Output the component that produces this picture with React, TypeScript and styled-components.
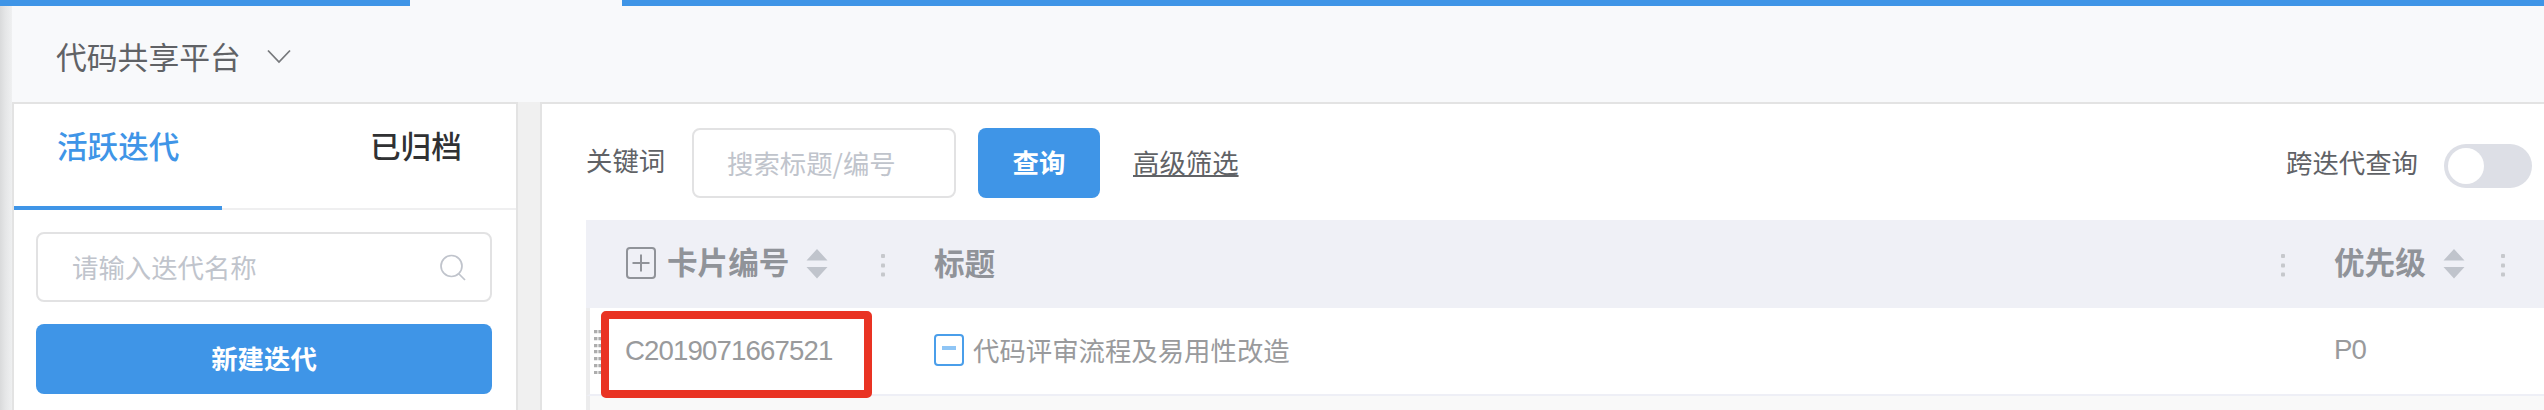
import React from "react";
import styled, { createGlobalStyle } from "styled-components";

const Global = createGlobalStyle`
  * { box-sizing: border-box; }
  html, body { margin: 0; padding: 0; overflow: hidden; }
  body {
    background: #f0f0f0;
    font-family: "Noto Sans CJK SC", "Liberation Sans", sans-serif;
    color: #606266;
  }
  button, input { font-family: inherit; }
`;

const Page = styled.div`
  width: 2544px;
  height: 410px;
  overflow: hidden;
  display: flex;
  flex-direction: column;
  background: #f0f0f0;
`;

const TopBar = styled.div`
  display: flex;
  flex: none;
  height: 6px;
  background: #3f95e7;
`;

const ActiveTab = styled.div`
  margin-left: 410px;
  width: 212px;
  background: #f8f9fb;
`;

const Main = styled.div`
  display: flex;
  flex: 1;
  min-height: 0;
`;

const EdgeShadow = styled.div`
  flex: none;
  width: 12px;
  background: linear-gradient(to right, #d9dadb, #e5e6e7 45%, #eff0f1);
`;

const Body = styled.div`
  flex: 1;
  min-width: 0;
  display: flex;
  flex-direction: column;
`;

const ProjectBar = styled.header`
  flex: none;
  height: 96px;
  padding: 3px 0 0 44px;
  display: flex;
  align-items: center;
  gap: 26px;
  background: #f8f9fb;
  font-size: 30.8px;
  line-height: 44px;
`;

const Columns = styled.div`
  flex: 1;
  min-height: 0;
  display: flex;
  gap: 22px;
`;

const Sidebar = styled.aside`
  flex: none;
  width: 506px;
  background: #fff;
  border: 2px solid #e3e3e3;
  border-bottom: 0;
`;

const Tabs = styled.nav`
  display: flex;
  height: 106px;
  border-bottom: 2px solid #efeff0;
`;

const Tab = styled.div<{ $active?: boolean }>`
  flex: none;
  width: ${(p) => (p.$active ? 208 : 294)}px;
  height: 106px;
  padding-top: 19px;
  padding-left: ${(p) => (p.$active ? 43 : 148)}px;
  font-size: 30.6px;
  line-height: 44px;
  font-weight: 500;
  color: ${(p) => (p.$active ? "#3f95e7" : "#303133")};
  border-bottom: ${(p) => (p.$active ? "4px solid #3f95e7" : "0")};
`;

const SideContent = styled.div`
  padding: 22px 24px 0 22px;
  display: flex;
  flex-direction: column;
  gap: 22px;
`;

const Field = styled.label<{ $width?: number; $inset: number }>`
  display: flex;
  align-items: center;
  flex: none;
  width: ${(p) => (p.$width ? p.$width + "px" : "auto")};
  height: 70px;
  padding: 0 24px 0 ${(p) => p.$inset}px;
  border: 2px solid #e2e2e3;
  border-radius: 8px;
  background: #fff;
`;

const Input = styled.input`
  flex: 1;
  min-width: 0;
  height: 60px;
  padding: 0 0 2px;
  border: 0;
  outline: 0;
  background: transparent;
  font-size: 26.4px;
  &::placeholder { color: #c0c4cc; opacity: 1; }
`;

const Button = styled.button<{ $width?: number }>`
  flex: none;
  width: ${(p) => (p.$width ? p.$width + "px" : "auto")};
  height: 70px;
  padding: 0 0 4px;
  border: 0;
  border-radius: 8px;
  background: #3f95e7;
  color: #fff;
  font-size: 26.4px;
  font-weight: 700;
`;

const Content = styled.main`
  flex: 1;
  min-width: 0;
  background: #fff;
  border-top: 2px solid #e3e3e3;
  border-left: 2px solid #e3e3e3;
  padding-left: 44px;
`;

const FilterBar = styled.div`
  display: flex;
  align-items: center;
  height: 116px;
  padding: 2px 12px 0 0;
  font-size: 26.4px;
  line-height: 38px;
`;

const Caption = styled.span`
  display: block;
  width: 106px;
  padding-bottom: 7px;
`;

const AdvancedLink = styled.a`
  margin: 0 auto 0 33px;
  padding-bottom: 2px;
  text-decoration: underline;
  text-decoration-thickness: 2px;
  text-underline-offset: 2px;
  text-decoration-skip-ink: none;
`;

const SwitchLabel = styled.span`
  margin-right: 26px;
  padding-bottom: 3px;
`;

const Switch = styled.div`
  width: 88px;
  height: 44px;
  margin-top: 6px;
  padding: 4px;
  border-radius: 22px;
  background: #dddfe6;
`;

const Knob = styled.div`
  width: 36px;
  height: 36px;
  border-radius: 50%;
  background: #fff;
`;

const Gap = styled.span<{ $w: number }>`
  flex: none;
  width: ${(p) => p.$w}px;
`;

const HeadRow = styled.div`
  display: grid;
  grid-template-columns: 348px 1400px 210px;
  height: 88px;
  background: #eff0f6;
  color: #909399;
  font-size: 30.6px;
  font-weight: 700;
  line-height: 44px;
`;

const HeadCell = styled.div<{ $inset?: number; $end?: number }>`
  display: flex;
  align-items: center;
  padding: 0 ${(p) => p.$end ?? 38}px 0 ${(p) => p.$inset ?? 0}px;
`;

const HeadText = styled.span<{ $lift: number }>`
  padding-bottom: ${(p) => p.$lift}px;
`;

const Dots = styled.svg`
  margin-left: auto;
  margin-top: 1px;
  flex: none;
`;

const DataRow = styled.div`
  display: grid;
  grid-template-columns: 344px 1400px 210px;
  height: 88px;
  border-left: 4px solid #ececed;
  border-bottom: 2px solid #eeeff6;
  color: #999a9c;
  font-size: 26.4px;
  line-height: 38px;
`;

const NextRow = styled.div`
  height: 14px;
  background: #f9f9f9;
  border-left: 4px solid #ececed;
`;

const Cell = styled.div`
  display: flex;
  align-items: center;
  padding-bottom: 2px;
`;

const CodeCell = styled(Cell)`
  position: relative;
  padding: 0 0 0 4px;
`;

const TitleText = styled.span`
  padding-bottom: 1px;
`;

const Latin = styled.span<{ $pad?: number }>`
  padding-left: ${(p) => p.$pad ?? 0}px;
  font-family: "Liberation Sans", sans-serif;
  font-size: 27.6px;
  letter-spacing: -0.85px;
`;

const Highlight = styled.div`
  position: absolute;
  left: 11px;
  top: 3px;
  width: 271px;
  height: 87px;
  border: 8px solid #e93323;
  border-radius: 5px;
`;

const SortIcon = () => (
  <svg width="22" height="30" viewBox="0 0 22 30" fill="#c0c4cc">
    <path d="M11 0 21.5 11.5H0.5Z M11 29.5 21.5 18H0.5Z" />
  </svg>
);

const DotsIcon = () => (
  <Dots width="6" height="24" viewBox="0 0 6 24" fill="#c6c8cc">
    <rect x="1" y="1" width="4" height="4" rx="1" />
    <rect x="1" y="10.5" width="4" height="4" rx="1" />
    <rect x="1" y="19.5" width="4" height="4" rx="1" />
  </Dots>
);

const PlusBox = () => (
  <svg width="30" height="34" viewBox="0 0 30 34" fill="none" stroke="#909399" strokeWidth="2">
    <rect x="1" y="1" width="28" height="30" rx="3" />
    <path d="M6.5 16H23.5 M15 7.5V24.5" />
  </svg>
);

const MinusBox = () => (
  <svg width="30" height="32" viewBox="0 0 30 32" fill="none" stroke="#4a9eea" strokeWidth="2">
    <rect x="1" y="1" width="28" height="30" rx="3" />
    <path d="M8 14H22" stroke="#8fc5f5" strokeWidth="4" />
  </svg>
);

const ChevronDown = () => (
  <svg width="24" height="16" viewBox="0 0 24 16" fill="none" stroke="#77797c" strokeWidth="1.8">
    <path d="M1 2.5 12 14 23 2.5" />
  </svg>
);

const SearchIcon = () => (
  <svg width="28" height="28" viewBox="0 0 28 28" fill="none" stroke="#c0c4cc" strokeWidth="1.7">
    <circle cx="13.5" cy="13" r="10.5" />
    <path d="M20.5 20.5 27 27" />
  </svg>
);

const handleRows = [0, 7, 14, 20, 27, 34, 41];

const DragHandle = () => (
  <svg width="16" height="46" viewBox="0 0 16 46" fill="#adadad">
    {handleRows.map((y) => (
      <path key={y} d={`M0 ${y + 2}h3.4v3.2h-3.4z M4.4 ${y + 2}h3.4v3.2h-3.4z`} />
    ))}
  </svg>
);

export default function App() {
  return (
    <Page>
      <Global />
      <TopBar>
        <ActiveTab />
      </TopBar>
      <Main>
        <EdgeShadow />
        <Body>
          <ProjectBar>
            <span>代码共享平台</span>
            <ChevronDown />
          </ProjectBar>
          <Columns>
            <Sidebar>
              <Tabs>
                <Tab $active>活跃迭代</Tab>
                <Tab>已归档</Tab>
              </Tabs>
              <SideContent>
                <Field $inset={34}>
                  <Input placeholder="请输入迭代名称" />
                  <SearchIcon />
                </Field>
                <Button>新建迭代</Button>
              </SideContent>
            </Sidebar>
            <Content>
              <FilterBar>
                <Caption>关键词</Caption>
                <Field $width={264} $inset={33}>
                  <Input placeholder="搜索标题/编号" />
                </Field>
                <Gap $w={22} />
                <Button $width={122}>查询</Button>
                <AdvancedLink>高级筛选</AdvancedLink>
                <SwitchLabel>跨迭代查询</SwitchLabel>
                <Switch>
                  <Knob />
                </Switch>
              </FilterBar>
              <HeadRow>
                <HeadCell $inset={40} $end={48}>
                  <PlusBox />
                  <Gap $w={11} />
                  <HeadText $lift={7}>卡片编号</HeadText>
                  <Gap $w={17} />
                  <SortIcon />
                  <DotsIcon />
                </HeadCell>
                <HeadCell $end={48}>
                  <HeadText $lift={4}>标题</HeadText>
                  <DotsIcon />
                </HeadCell>
                <HeadCell>
                  <HeadText $lift={7}>优先级</HeadText>
                  <Gap $w={17} />
                  <SortIcon />
                  <DotsIcon />
                </HeadCell>
              </HeadRow>
              <DataRow>
                <CodeCell>
                  <DragHandle />
                  <Latin $pad={15}>C2019071667521</Latin>
                  <Highlight />
                </CodeCell>
                <Cell>
                  <MinusBox />
                  <Gap $w={9} />
                  <TitleText>代码评审流程及易用性改造</TitleText>
                </Cell>
                <Cell>
                  <Latin>P0</Latin>
                </Cell>
              </DataRow>
              <NextRow />
            </Content>
          </Columns>
        </Body>
      </Main>
    </Page>
  );
}
